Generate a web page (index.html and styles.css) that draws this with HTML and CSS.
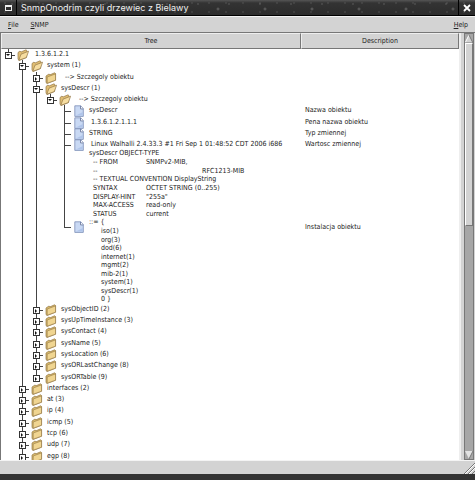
FILE: index.html
```html
<!DOCTYPE html>
<html lang="pl">
<head>
  <meta charset="UTF-8">
  <meta name="viewport" content="width=device-width, initial-scale=1.0">
  <title>SnmpOnodrim czyli drzewiec z Bielawy</title>
  <link rel="stylesheet" href="styles.css">
</head>
<body>
  <!-- Shared icons -->
  <svg class="sprites" aria-hidden="true">
    <symbol id="open" viewBox="0 0 12 12">
      <path d="M1 3.5L3 2l1 1 5-2.2 1 .9-.5 6.8L2 11.5 1 10z" fill="#e0bd72" stroke="#94794a" stroke-width=".7"/>
      <path d="M1.8 11.3L4 5.2l7.6-3-2.3 6.4z" fill="#f6dda0" stroke="#94794a" stroke-width=".7"/>
    </symbol>
    <symbol id="closed" viewBox="0 0 12 12">
      <path d="M1 4l3-2 1 .8L9.6.8l1 .8v6.6L2 11.5 1 10.6z" fill="#d9b968" stroke="#94794a" stroke-width=".7"/>
      <path d="M2.2 11.2V5l8.3-3.1v6.3z" fill="#f0d591" stroke="#94794a" stroke-width=".6"/>
    </symbol>
    <symbol id="page" viewBox="0 0 12 12">
      <path d="M1.8.8h6l2.5 2.8v7.8H1.8z" fill="#c9d9f4" stroke="#7a8cb5" stroke-width=".8"/>
      <path d="M7.5.9v3h2.8" fill="#fff" stroke="#5f6f96" stroke-width=".8"/>
      <path d="M3 10.5h6.8V7z" fill="#afc4ea"/>
    </symbol>
  </svg>

  <div class="window">
    <header class="titlebar">
      <button class="win-menu" aria-label="Window menu"><span></span></button>
      <h1>SnmpOnodrim czyli drzewiec z Bielawy</h1>
      <button class="win-close" aria-label="Close">
        <svg viewBox="0 0 8 8"><path d="M1 1l6 6M7 1L1 7" stroke="#fff" stroke-width="1.8"/></svg>
      </button>
    </header>

    <nav class="menubar">
      <button><u>F</u>ile</button>
      <button><u>S</u>NMP</button>
      <button class="help"><u>H</u>elp</button>
    </nav>

    <main class="pane">
      <table class="tree">
        <thead>
          <tr><th>Tree</th><th>Description</th></tr>
        </thead>
        <tbody id="rows"></tbody>
      </table>
      <div class="scrollbar">
        <button class="up" aria-label="Scroll up"><svg viewBox="0 0 8 8"><path d="M4 0l4 8H0z" fill="#d3d3d3"/><path d="M4 0L0 8" stroke="#fff"/><path d="M4 0l4 8H0" fill="none" stroke="#777"/></svg></button>
        <div class="trough"><div class="thumb"></div></div>
        <button class="down" aria-label="Scroll down"><svg viewBox="0 0 8 8"><path d="M0 0h8L4 8z" fill="#e2e2e2"/><path d="M8 0L4 8" stroke="#777"/></svg></button>
      </div>
    </main>

    <footer class="statusbar">
      <svg class="grip" viewBox="0 0 12 12"><path d="M1 12L12 1M5 12l7-7M9 12l3-3" stroke="#777"/><path d="M2 12L12 2M6 12l6-6" stroke="#fff"/></svg>
    </footer>
  </div>

  <script src="tree.js"></script>
</body>
</html>
```
FILE: styles.css
```css
* {
  box-sizing: border-box;
}
body {
  margin: 0;
  font-family: "DejaVu Sans Condensed", "DejaVu Sans", sans-serif;
  font-size: 7px;
  color: #222;
}
button {
  margin: 0;
  padding: 0;
  border: none;
  background: none;
  font: inherit;
  color: inherit;
}
.sprites {
  display: none;
}
.window {
  display: flex;
  flex-direction: column;
  height: 100vh;
  border-bottom: 6px solid #333;
  background-color: #d3d3d3;
}

/* Title bar, dark stone with light specks */
.titlebar {
  display: flex;
  flex: none;
  height: 16px;
  border-bottom: 1px solid #000;
  background:
    radial-gradient(circle at 12px 4px, #777 0, transparent 1px) 0 0 / 31px 13px,
    radial-gradient(circle at 30px 9px, #6a6a6a 0, transparent 2px) 0 0 / 47px 16px,
    radial-gradient(circle at 5px 3px, #666 0, transparent 1px) 0 0 / 17px 9px,
    linear-gradient(#555, #333 3px, #2c2c2c);
  color: #eee;
}
.titlebar h1 {
  flex: 1;
  margin: 0;
  padding-left: 4px;
  font-family: Inter, "DejaVu Sans", sans-serif;
  font-size: 9px;
  font-weight: normal;
  line-height: 15px;
}
.win-menu, .win-close {
  display: flex;
  align-items: center;
  justify-content: center;
  width: 17px;
  border-right: 1px solid #000;
}
.win-menu span {
  width: 7px;
  height: 6px;
  border: 1px solid #eee;
  border-top-width: 2px;
}
.win-close {
  border-right: none;
  border-left: 1px solid #000;
}
.win-close svg {
  width: 8px;
  height: 8px;
}

/* Menu bar */
.menubar {
  display: flex;
  flex: none;
  gap: 12px;
  height: 17px;
  padding: 0 7px 0 8px;
  border-top: 1px solid #f4f4f4;
  border-bottom: 1px solid #777;
}
.menubar .help {
  margin-left: auto;
}

/* Tree */
.pane {
  display: flex;
  flex: 1;
  min-height: 0;
  gap: 3px;
  padding-right: 1px;
  border-left: 1px solid #777;
}
.tree {
  display: flex;
  flex: 1;
  flex-direction: column;
  overflow: hidden;
  border-right: 2px solid #eee;
  background-color: #fff;
}
.tree tr {
  display: grid;
  grid-template-columns: 300fr 158fr;
}
.tree th {
  height: 16px;
  padding: 0;
  border: 1px solid #777;
  border-top-color: #eee;
  border-left-color: #eee;
  background-color: #d3d3d3;
  font-weight: normal;
  line-height: 14px;
}
.tree tbody {
  display: flex;
  flex: 1;
  flex-direction: column;
  min-height: 0;
  margin-bottom: -2px;
}
.tree tbody tr {
  flex: 11 0 0;
  min-height: 0;
}
.tree tbody tr.linux {
  flex-grow: 77;
}
.tree tbody tr.oid {
  flex-grow: 83;
}
.tree td {
  min-height: 0;
  padding: 0;
  line-height: 10px;
  white-space: pre;
}
.tree td:last-child {
  padding-left: 4px;
}
.oid td:last-child {
  padding-top: 4px;
}
.node {
  display: flex;
  height: 100%;
}
.guide {
  position: relative;
  flex: none;
  width: 14px;
}
.line::before {
  content: "";
  position: absolute;
  top: 0;
  bottom: 0;
  left: 7px;
  border-left: 1px solid #444;
}
.end::before {
  bottom: auto;
  height: 9px;
}
.tick::after {
  content: "";
  position: absolute;
  top: 6px;
  left: 7px;
  width: 7px;
  border-top: 1px solid #444;
}
.oid .end, .oid .icon {
  margin-top: 3px;
}
.oid .end::before {
  top: -3px;
}
.toggle {
  position: absolute;
  top: 3px;
  left: 4px;
  z-index: 1;
  width: 7px;
  height: 7px;
  border: 1px solid #333;
  background-color: #fff;
}
.toggle::before {
  content: "";
  position: absolute;
  top: 1px;
  left: 1px;
  border: 2px solid transparent;
  border-left-color: #111;
  border-right-width: 0;
}
.toggle.expanded::before {
  border: 2px solid transparent;
  border-top-color: #111;
  border-bottom-width: 0;
  left: 0;
}
.icon {
  flex: none;
  width: 12px;
  height: 12px;
  margin: 0 4px 0 2px;
}
.label {
  display: flex;
  flex: 1;
  flex-direction: column;
}
.lines {
  display: grid;
  flex: 1;
  grid-auto-rows: 1fr;
  line-height: 8px;
}
.lines div {
  display: grid;
  grid-template-columns: 57px 1fr;
  min-height: 0;
}
.lines .text {
  display: block;
}
.lines .far {
  padding-left: 56px;
}

/* Scrollbar */
.scrollbar {
  display: flex;
  flex: none;
  flex-direction: column;
  width: 10px;
  border: 1px solid #777;
  background-color: #a6a6a6;
}
.scrollbar button {
  flex: none;
  height: 9px;
}
.scrollbar svg {
  display: block;
  width: 8px;
  height: 8px;
}
.trough {
  flex: 1;
}
.thumb {
  height: 45%;
  border: 1px solid #777;
  border-top-color: #fff;
  border-left-color: #fff;
  background-color: #d3d3d3;
}

/* Status bar */
.statusbar {
  display: flex;
  flex: none;
  align-items: flex-end;
  justify-content: flex-end;
  height: 14px;
  border-top: 1px solid #f4f4f4;
}
.grip {
  width: 12px;
  height: 12px;
}
```
FILE: tree.js
```js
// level, kind, label, description, row class
const nodes = [
  [0, "open", " 1.3.6.1.2.1"],
  [1, "open", "system (1)"],
  [2, "closed", "  --> Szczegoly obiektu"],
  [2, "open", "sysDescr (1)"],
  [3, "open", "  --> Szczegoly obiektu"],
  [4, "page", "sysDescr", "Nazwa obiektu"],
  [4, "page", " 1.3.6.1.2.1.1.1", "Pena nazwa obiektu"],
  [4, "page", "STRING", "Typ zmiennej"],
  [4, "page", " Linux Walhalli 2.4.33.3 #1 Fri Sep 1 01:48:52 CDT 2006 i686", "Wartosc zmiennej", "linux"],
  [4, "page", "", "Instalacja obiektu", "oid"],
  [2, "closed", "sysObjectID (2)"],
  [2, "closed", "sysUpTimeInstance (3)"],
  [2, "closed", "sysContact (4)"],
  [2, "closed", "sysName (5)"],
  [2, "closed", "sysLocation (6)"],
  [2, "closed", "sysORLastChange (8)"],
  [2, "closed", "sysORTable (9)"],
  [1, "closed", "interfaces (2)"],
  [1, "closed", "at (3)"],
  [1, "closed", "ip (4)"],
  [1, "closed", "icmp (5)"],
  [1, "closed", "tcp (6)"],
  [1, "closed", "udp (7)"],
  [1, "closed", "egp (8)"]
];

const details = {
  linux: `
    <div class="text">sysDescr OBJECT-TYPE</div>
    <div><span>  -- FROM</span><span>SNMPv2-MIB,</span></div>
    <div><span>  --</span><span class="far">RFC1213-MIB</span></div>
    <div class="text">  -- TEXTUAL CONVENTION DisplayString</div>
    <div><span>  SYNTAX</span><span>OCTET STRING (0..255)</span></div>
    <div><span>  DISPLAY-HINT</span><span>"255a"</span></div>
    <div><span>  MAX-ACCESS</span><span>read-only</span></div>
    <div><span>  STATUS</span><span>current</span></div>`.replace(/>\n\s*</g, "><").trim(),
  oid: ["::= {", "iso(1)", "org(3)", "dod(6)", "internet(1)", "mgmt(2)", "mib-2(1)", "system(1)", "sysDescr(1)", "0 }"]
    .map((text, i) => `<div class="text">${i ? "      " : ""}${text}</div>`).join("")
};

// Does a later row continue the line drawn at this level?
function continues(index, level) {
  for (let i = index + 1; i < nodes.length; i++) {
    if (nodes[i][0] < level) return false;
    if (nodes[i][0] === level) return true;
  }
  return false;
}

document.getElementById("rows").innerHTML = nodes.map(([level, kind, label, description = "", name = ""], index) => {
  let guides = "";
  for (let i = 0; i < level; i++) {
    guides += `<span class="guide ${continues(index, i) ? "line" : ""}"></span>`;
  }
  const toggle = kind === "page" ? "" :
    `<button class="toggle ${kind === "open" ? "expanded" : ""}" aria-label="Toggle ${label.trim()}"></button>`;
  guides += `<span class="guide tick line ${continues(index, level) ? "" : "end"}">${toggle}</span>`;
  const lines = details[name] ? `<div class="lines">${details[name]}</div>` : "";
  return `<tr class="${name}"><td><div class="node">${guides}<svg class="icon"><use href="#${kind}"/></svg><div class="label">${label ? `<div>${label}</div>` : ""}${lines}</div></div></td><td>${description}</td></tr>`;
}).join("");
```
